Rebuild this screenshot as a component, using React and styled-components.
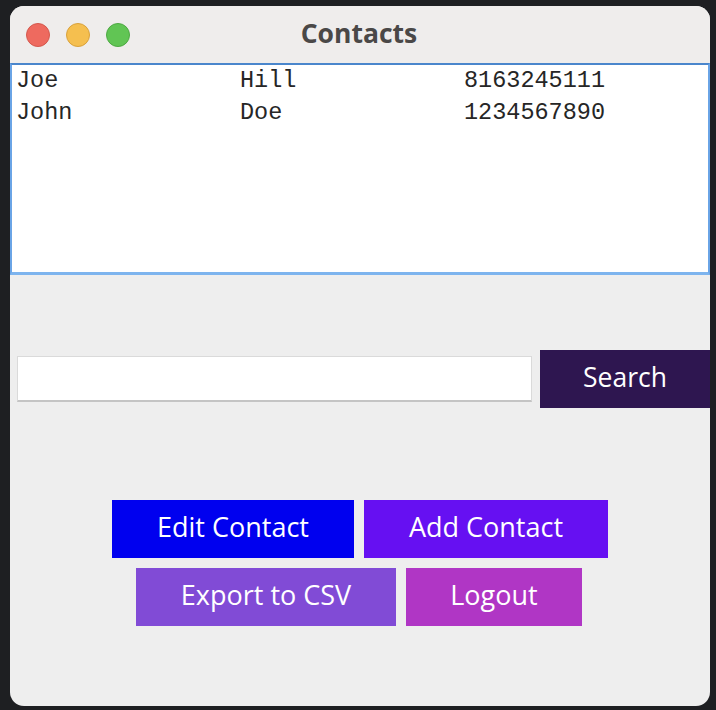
import styled, { createGlobalStyle } from "styled-components";

const GlobalStyle = createGlobalStyle`
  html, body {
    margin: 0;
    padding: 0;
    background: #1e1f22;
  }
  * {
    box-sizing: border-box;
  }
`;

const contacts = [
  { first: "Joe", last: "Hill", phone: "8163245111" },
  { first: "John", last: "Doe", phone: "1234567890" },
];

export default function App() {
  return (
    <>
      <GlobalStyle />
      <Desktop>
        <Window>
          <TitleBar>
            <Lights>
              <Light $color="#ee6a5f" $edge="#d4584d" />
              <Light $color="#f5bf4f" $edge="#d9a23c" />
              <Light $color="#61c554" $edge="#4ea943" />
            </Lights>
            <Title>Contacts</Title>
            <span />
          </TitleBar>

          <Table>
            {contacts.map(c => (
              <Row key={c.phone}>
                <Cell>{c.first}</Cell>
                <Cell>{c.last}</Cell>
                <Cell>{c.phone}</Cell>
              </Row>
            ))}
          </Table>

          <Body>
            <SearchRow>
              <SearchInput type="text" />
              <SearchButton>Search</SearchButton>
            </SearchRow>

            <ButtonGroup>
              <ButtonRow>
                <ActionButton $bg="#0000ef" $width={242}>Edit Contact</ActionButton>
                <ActionButton $bg="#6610f2" $width={244}>Add Contact</ActionButton>
              </ButtonRow>
              <ButtonRow $shift={-1}>
                <ActionButton $bg="#814bd6" $width={260}>Export to CSV</ActionButton>
                <ActionButton $bg="#b036c5" $width={176}>Logout</ActionButton>
              </ButtonRow>
            </ButtonGroup>
          </Body>
        </Window>
      </Desktop>
    </>
  );
}

const Desktop = styled.div`
  width: 716px;
  height: 710px;
  background: #1e1f22;
  overflow: hidden;
  padding-top: 6px;
`;

const Window = styled.div`
  margin-left: 10px;
  width: 700px;
  height: 700px;
  border-radius: 14px;
  overflow: hidden;
  background: #eeeeee;
  display: flex;
  flex-direction: column;
`;

const TitleBar = styled.div`
  height: 57px;
  background: #efedec;
  display: grid;
  grid-template-columns: 1fr auto 1fr;
  align-items: center;
  padding: 0 16px;
`;

const Lights = styled.div`
  display: flex;
  gap: 16px;
`;

const Light = styled.span`
  width: 24px;
  height: 24px;
  border-radius: 50%;
  background: ${p => p.$color};
  border: 1px solid ${p => p.$edge};
`;

const Title = styled.div`
  font-family: "Open Sans", sans-serif;
  font-weight: 700;
  font-size: 26.5px;
  line-height: 30px;
  color: #4a4847;
  margin: 0 0 4px -2px;
`;

const Table = styled.div`
  height: 212px;
  background: #ffffff;
  border: 2px solid #6aa4e6;
  border-top-color: #4a86cc;
  border-bottom: 3px solid #7db4ee;
`;

const Row = styled.div`
  display: grid;
  grid-template-columns: 224px 224px 1fr;
  height: 32px;
  align-items: center;
  padding-left: 4px;
`;

const Cell = styled.div`
  font-family: "Liberation Mono", "Courier New", monospace;
  font-size: 23.5px;
  line-height: 32px;
  color: #262626;
`;

const Body = styled.div`
  flex: 1;
  display: flex;
  flex-direction: column;
  padding-top: 75px;
`;

const SearchRow = styled.div`
  display: flex;
  align-items: center;
  gap: 8px;
  padding-left: 7px;
`;

const SearchInput = styled.input`
  width: 515px;
  height: 46px;
  border: 1px solid #dadada;
  border-bottom: 2px solid #c4c4c4;
  background: #ffffff;
  outline: none;
  padding: 0 8px;
`;

const SearchButton = styled.button`
  width: 170px;
  height: 58px;
  border: none;
  background: #2e1650;
  color: #ffffff;
  font-family: "Open Sans", sans-serif;
  font-size: 26.5px;
  padding: 0 0 5px;
`;

const ButtonGroup = styled.div`
  margin-top: 92px;
  display: flex;
  flex-direction: column;
  align-items: center;
  gap: 10px;
`;

const ButtonRow = styled.div`
  display: flex;
  gap: 10px;
  margin-left: ${p => (p.$shift || 0) * 2}px;
`;

const ActionButton = styled.button`
  width: ${p => p.$width}px;
  height: 58px;
  border: none;
  padding: 0 0 5px;
  background: ${p => p.$bg};
  color: #ffffff;
  font-family: "Open Sans", sans-serif;
  font-size: 27px;
`;
